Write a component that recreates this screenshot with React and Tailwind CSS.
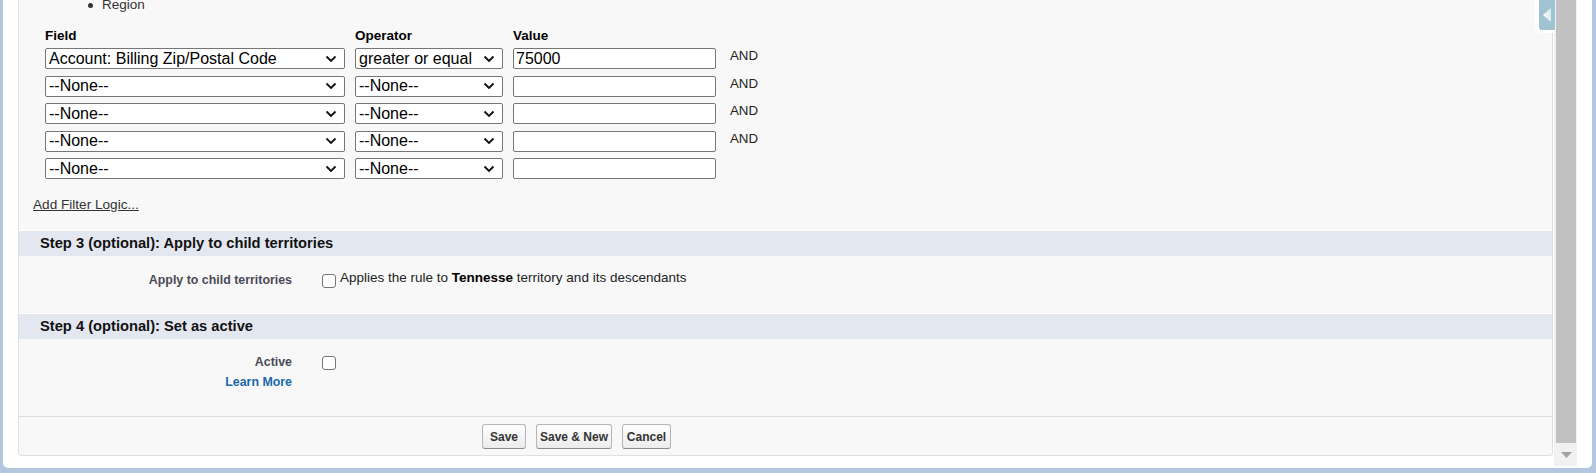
import React from 'react';

const Chevron = () => (
  <svg width="12" height="8" viewBox="0 0 12 8" className="shrink-0">
    <path d="M1.5 1.5 L6 6 L10.5 1.5" fill="none" stroke="#111" strokeWidth="1.9" />
  </svg>
);

const SelectBox = ({ value, width }) => (
  <div className={`${width} h-[21px] bg-white border border-[#767676] rounded-[2px] flex items-center justify-between pl-[3px] pr-[7px] text-[16px] text-black leading-none`}>
    <span className="whitespace-nowrap">{value}</span>
    <Chevron />
  </div>
);

const Checkbox = ({ className = '' }) => (
  <div className={`w-[14px] h-[14px] shrink-0 bg-white border border-[#767676] rounded-[3px] ${className}`} />
);

const rows = [
  { field: 'Account: Billing Zip/Postal Code', op: 'greater or equal', value: '75000', and: true },
  { field: '--None--', op: '--None--', value: '', and: true },
  { field: '--None--', op: '--None--', value: '', and: true },
  { field: '--None--', op: '--None--', value: '', and: true },
  { field: '--None--', op: '--None--', value: '', and: false },
];

const Band = ({ children }) => (
  <div className="h-[26px] border-t border-white bg-[#e3e8f0] flex items-center pl-[21px] text-[14.7px] font-bold text-[#111]">
    {children}
  </div>
);

const Btn = ({ label, width }) => (
  <button className={`${width} h-[25px] rounded-[3px] border border-[#b5b5b5] border-b-[#8a8a8a] bg-linear-to-b from-white to-[#ececec] text-[12px] font-bold text-[#333] flex items-center justify-center`}>
    {label}
  </button>
);

export default function App() {
  return (
    <div className="w-[1596px] h-[473px] bg-[#b3c6df] overflow-hidden font-['Liberation_Sans',Arial,sans-serif] text-[#222]">
      <div className="ml-[3px] w-[1589px] h-[468px] bg-white rounded-b-[5px] flex relative">
        {/* scrolled content */}
        <div className="w-[1551px] h-[466px] pl-[15px] pr-[1px] overflow-hidden flex flex-col">
          <div className="w-[1535px] -mt-[6px] bg-[#f8f8f8] border-x border-b border-[#e0e0e0] rounded-b-[4px] flex flex-col shrink-0">
            {/* bullet list remainder */}
            <div className="h-[22px] flex items-center pl-[69px] text-[13.5px] text-[#333]">
              <div className="w-[5px] h-[5px] rounded-full bg-[#333] mr-[9px]" />
              Region
            </div>

            {/* filter criteria */}
            <div className="pl-[26px] mt-[10px]">
              <div className="grid grid-cols-[300px_148px_203px_auto] gap-x-[10px] h-[20px] mb-[2px] items-center text-[13.5px] font-bold text-black">
                <div>Field</div>
                <div>Operator</div>
                <div>Value</div>
                <div />
              </div>
              {rows.map((r, i) => (
                <div key={i} className="grid grid-cols-[300px_148px_203px_auto] gap-x-[10px] h-[27.5px] items-start">
                  <SelectBox value={r.field} width="w-[300px]" />
                  <SelectBox value={r.op} width="w-[148px]" />
                  <div className="w-[203px] h-[21px] bg-white border border-[#767676] rounded-[2px] flex items-center pl-[2px] text-[16px] text-black leading-none">
                    {r.value}
                  </div>
                  <div className="ml-[4px] text-[13.3px] text-[#222] leading-[16px]">{r.and ? 'AND' : ''}</div>
                </div>
              ))}
            </div>

            <div className="h-[20px] mt-[9.5px] pl-[14px] flex items-center text-[13.6px] text-[#333]">
              <span className="underline">Add Filter Logic...</span>
            </div>

            <div className="mt-[15px]">
              <Band>Step 3 (optional): Apply to child territories</Band>
            </div>
            <div className="h-[57px] pt-[13px] flex items-start">
              <div className="w-[283px] pr-[10px] mt-[3px] text-right text-[12.4px] leading-[16px] font-bold text-[#4a4a56]">
                Apply to child territories
              </div>
              <div className="pl-[20px] flex items-start">
                <Checkbox className="mt-[5px]" />
                <span className="ml-[4px] text-[13.5px] leading-[18px] text-[#222]">
                  Applies the rule to <b className="text-black">Tennesse</b> territory and its descendants
                </span>
              </div>
            </div>

            <Band>Step 4 (optional): Set as active</Band>
            <div className="h-[77px] pt-[15px] flex items-start">
              <div className="w-[283px] pr-[10px] text-right flex flex-col items-end">
                <div className="text-[12.4px] leading-[16px] font-bold text-[#4a4a56]">Active</div>
                <div className="mt-[4px] text-[12.4px] leading-[16px] font-bold text-[#1a69a8]">Learn More</div>
              </div>
              <div className="pl-[20px]">
                <Checkbox className="mt-[2px]" />
              </div>
            </div>

            <div className="border-t border-[#dcdcdc] pt-[7px] pb-[6px] pl-[463px] flex gap-[10px]">
              <Btn label="Save" width="w-[44px]" />
              <Btn label="Save & New" width="w-[76px]" />
              <Btn label="Cancel" width="w-[49px]" />
            </div>
          </div>
        </div>

        {/* collapse handle over the panel */}
        <div className="absolute left-[1532px] top-0 w-[20px] h-[33px] bg-white rounded-bl-[6px] pl-[4px] pb-[3px]">
          <div className="w-full h-full bg-[#a1c3d1] rounded-bl-[3px] flex items-center justify-center">
            <svg width="10" height="16" viewBox="0 0 10 16">
              <defs>
                <linearGradient id="tri" x1="0" x2="1" y1="0" y2="0">
                  <stop offset="0" stopColor="#ffffff" />
                  <stop offset="1" stopColor="#dbe9ef" />
                </linearGradient>
              </defs>
              <polygon points="1,8 9,1 9,15" fill="url(#tri)" />
            </svg>
          </div>
        </div>

        {/* scrollbar */}
        <div className="w-[23px] h-[466px] bg-[#f1f1f1] flex flex-col pl-[2px] pr-[1px]">
          <div className="h-[443px] bg-[#c1c1c1]" />
          <div className="flex-1 flex items-center justify-center">
            <svg width="11" height="6" viewBox="0 0 11 6">
              <polygon points="0,0 11,0 5.5,6" fill="#a3a3a3" />
            </svg>
          </div>
        </div>
        <div className="w-[15px]" />
      </div>
    </div>
  );
}
